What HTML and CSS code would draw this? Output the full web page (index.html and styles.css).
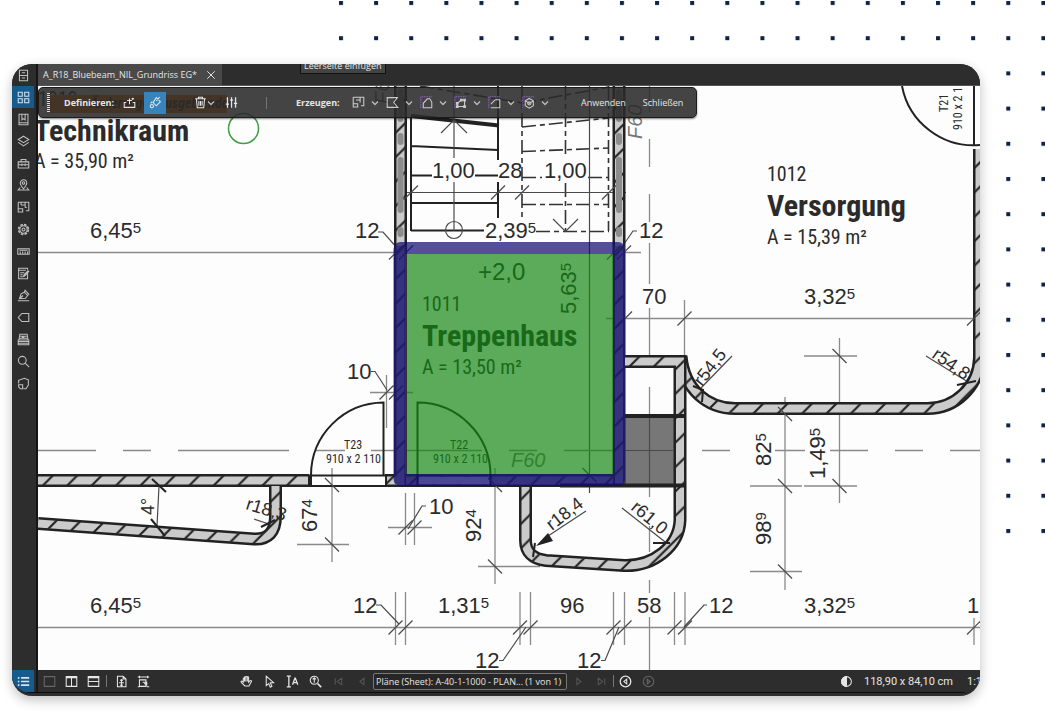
FILE: index.html
```html
<!DOCTYPE html>
<html lang="de">
<head>
<meta charset="utf-8">
<title>A_R18_Bluebeam_NIL_Grundriss EG</title>
<link rel="stylesheet" href="styles.css">
</head>
<body>
<svg class="dots" width="707" height="535" aria-hidden="true">
  <defs><pattern id="dot" width="35.12" height="35.2" patternUnits="userSpaceOnUse"><rect x="1" y="1" width="4" height="4" fill="#0b2348"/></pattern></defs>
  <rect width="707" height="535" fill="url(#dot)"/>
</svg>
<main class="app">
  <div class="body">
    <nav class="rail" aria-label="Bedienfelder">
      <button aria-label="Dateizugriff"><svg viewBox="0 0 16 16"><path d="M3 1.500h10v13H3zM3 8h10M6 4.500h4M6 11h4"/></svg></button>
      <button class="on" aria-label="Miniaturen"><svg viewBox="0 0 16 16"><path d="M1.500 1.500h5v5h-5zM9.500 1.500h5v5h-5zM1.500 9.500h5v5h-5zM9.500 9.500h5v5h-5z"/></svg></button>
      <button aria-label="Lesezeichen"><svg viewBox="0 0 16 16"><path d="M4 1.500h9.500v13H2.500v-13zM6 1.500v7l2-1.500 2 1.500v-7M2.500 12h11"/></svg></button>
      <button aria-label="Ebenen"><svg viewBox="0 0 16 16"><path d="M8 1.500l6.500 4L8 9.500l-6.500-4zM1.500 9L8 13.500 14.500 9"/></svg></button>
      <button aria-label="Werkzeuge"><svg viewBox="0 0 16 16"><path d="M1.500 6h13v7.500h-13zM5 6V3h6v3M1.500 9.500h13M6 8v3M10 8v3"/></svg></button>
      <button aria-label="Standorte"><svg viewBox="0 0 16 16"><path d="M8 12C5 8.500 4 7 4 5a4 4 0 0 1 8 0c0 2-1 3.500-4 7zM4 10.500l-2.500 3h13l-2.500-3"/><circle cx="8" cy="5" r="1.500"/></svg></button>
      <button aria-label="Räume"><svg viewBox="0 0 16 16"><path d="M1.500 1.500h13V12H11M1.500 1.500v12H7v-4H1.500M5 1.500V5M5 5h5V1.500M10 5v3M10 8h2"/></svg></button>
      <button aria-label="Eigenschaften"><svg viewBox="0 0 16 16"><circle cx="8" cy="8" r="6" stroke-width="2" stroke-dasharray="3.200 1.500"/><circle cx="8" cy="8" r="4.500"/><circle cx="8" cy="8" r="1.800"/></svg></button>
      <button aria-label="Messungen"><svg viewBox="0 0 16 16"><path d="M1 4.500h14v7H1zM4 8v3M7 8v3M10 8v3M13 8v3M3 6.500h10"/></svg></button>
      <button aria-label="Formulare"><svg viewBox="0 0 16 16"><path d="M13 8v6.500H2v-13h11v2M2 4h9M4 7h5M4 9.500h3M4 12h3M14.500 5.500l-5 5.500-1.500.500.500-1.500 5-5.500z"/></svg></button>
      <button aria-label="Signaturen"><svg viewBox="0 0 16 16"><path d="M1 14.500h14M3 12l2-6 4-2 4 4-2.500 3.500zM3 12l4.500-4M9 4l1-2.500 4.500 5L13 8"/></svg></button>
      <button aria-label="Markierungen"><svg viewBox="0 0 16 16"><path d="M6 3h8.500v10H6L1.500 8z"/></svg></button>
      <button aria-label="Sets"><svg viewBox="0 0 16 16"><path d="M3.500 1.500h9l1 7h-11zM1.500 8.500h13v6h-13zM2 10.500h12M2 12.500h12M4 4h8M3.500 6.500h9"/><path stroke-width="2.500" d="M6 5h3"/></svg></button>
      <button aria-label="Suchen"><svg viewBox="0 0 16 16"><circle cx="6.500" cy="6.500" r="4.800"/><path d="M10 10l5 5"/></svg></button>
      <button aria-label="Studio"><svg viewBox="0 0 16 16"><path d="M2 8V4l7-2.500 5 2V10l-3 4.500H8M2 9.500h5v5H4L2 12z"/></svg></button>
      <button class="on last" aria-label="Markierungsliste"><svg viewBox="0 0 16 16"><path stroke-width="2" d="M5 3.500h10M5 8h10M5 12.500h10M1 3.500h2M1 8h2M1 12.500h2"/></svg></button>
    </nav>
    <div class="work">
      <header class="tabs">
        <div class="tab"><span>A_R18_Bluebeam_NIL_Grundriss EG*</span><button aria-label="Tab schließen"><svg viewBox="0 0 16 16"><path d="M3 3l10 10M13 3L3 13"/></svg></button></div>
        <div class="tip" role="tooltip">Leerseite einfügen</div>
      </header>
      <section class="view">
        <svg class="plan" viewBox="38 86 942 584" preserveAspectRatio="xMinYMin slice" role="img" aria-label="Grundriss EG">
          <defs>
            <pattern id="ha" width="24.400" height="24.400" patternUnits="userSpaceOnUse" patternTransform="translate(16 0)"><path d="M-2 26.400L26.400 -2M-2 2L2 -2M22.400 26.400L26.400 22.400" stroke="#222" stroke-width="2.200"/></pattern>
            <pattern id="hb" width="24.400" height="24.400" patternUnits="userSpaceOnUse" patternTransform="translate(20 0)"><path d="M-2 26.400L26.400 -2M-2 2L2 -2M22.400 26.400L26.400 22.400" stroke="#222" stroke-width="2.200"/></pattern>
            <path id="t" d="M-7 7L7 -7" class="thin dk"/>
            <path id="v" d="M-7 -7L7 7" class="thin dk"/>
            <path id="w1" d="M38 480.500H309M385 480.500H397"/>
            <path id="w2" d="M38 523.500L254 539Q275.500 540 275.500 516V486"/>
            <path id="w3" d="M400.500 86V486M619 86V486M406 480.500H613"/>
            <path id="w4" d="M625 361.500H680V520A54 47 0 0 1 624 565.500L546 560.500Q525.500 558 525.500 540V486"/>
            <path id="w5" d="M681 356C684 390 708 408.500 735 408.500H927A52 52 0 0 0 979.500 358V149"/>
          </defs>

          <!-- room 1010, legend strip -->
          <text x="38" y="106" class="n20">1010</text>
          <rect x="50" y="95" width="177" height="18" fill="#ff7a00"/>
          <text x="90" y="108" class="strip">Änderungen ausgeblendet</text>

          <!-- stairs -->
          <g class="mid">
            <path d="M411 146L498 150M411 175.500H432M475 175.500H498M411 203H498M411 230.500H484M411 118V231M498 86V160M498 182V218"/>
            <path d="M411 116L499 125.500" stroke-width="4"/>
          </g>
          <g class="dash">
            <path d="M420 86L522 103M522 103L609 87M522 127L609 118M522 151.500L609 148M522 177.500H542M588 177.500H609M522 204.500H609M536 231.500H609"/>
            <path d="M522 86V218M608.500 86V231M565.500 86V158M565.500 183V231"/>
          </g>
          <path class="thin dk" d="M454 86V158M454 182V231M441 133L454 120L467 133M553 219L565.500 231.500L578 219M405 192.500H626M589.500 86V493"/>
          <circle cx="454" cy="230" r="8.500" class="thin dk"/>

          <!-- grid axes and dimension lines -->
          <path class="thin" d="M38 450.500H96M123 450.500H151M178 450.500H289M315 450.500H345M371 450.500H482M509 450.500H537M564 450.500H673M702 450.500H730M775 450.500H805M830 450.500H868M895 450.500H923M950 450.500H980
            M649.500 86V112M649.500 139V167M649.500 194V222M649.500 243V284M649.500 308V359M649.500 387V497M649.500 526V552M649.500 580V593M649.500 617V670
            M38 252.500H405M614 252.500H641M38 627.500H980M606 318.500H980
            M395.500 592V645M405.500 592V645M520 592V645M530.500 592V645M613.500 592V645M624.500 592V645M674.500 592V645M685 592V645M974 618V645
            M684.500 300V356M785 397V590M750 486H802M750 571.500H802M839.500 338V503M804 356H857M804 486H857
            M332 468V562M297 544.500H349M495 468V584M478 566.500H540M405.500 493V545M414.500 493V545M388 527.500H432M386.500 375V428M370 392.500H413"/>
          <path class="thin dk" d="M378 232H383L398 249M637 231H633L624 244M371 371.500H375L387 390M426 506H422L408 529M376 605H381L399 624M499 660.500H503L526 627M601 660.500H605L619 627M707 605H704L684 627M159 486L157 526M732 356L701 388M926 356L968 382M586 511L545 538M622 508L669 545M254 519L272 525"/>

          <!-- walls -->
          <rect x="625" y="416" width="50" height="69" fill="#777"/>
          <path class="thin dk" d="M625 450.500H673M649.500 416V485"/>
          <g class="edge"><use href="#w5"/></g>
          <g class="core"><use href="#w5"/></g>
          <g class="hatch"><use href="#w5" stroke="url(#hb)"/></g>
          <g class="edge"><use href="#w1"/><use href="#w2"/><use href="#w3"/><use href="#w4"/></g>
          <g class="core"><use href="#w1"/><use href="#w2"/><use href="#w3"/><use href="#w4"/></g>
          <g class="hatch"><use href="#w1" stroke="url(#ha)"/><use href="#w2" stroke="url(#ha)"/><use href="#w3" stroke="url(#ha)"/><use href="#w4" stroke="url(#hb)"/></g>
          <path d="M400.500 92V119M619 92V119M400.500 136V142M619 136V142M400.500 160V210M619 160V210M400.500 230V234M619 230V234" stroke="#8c8c8c" stroke-width="6" stroke-linecap="round"/>
          <path d="M400.500 246V480H619V246" fill="none" stroke="#666" stroke-opacity=".5" stroke-width="12"/>
          <path class="mid" d="M309 475V486M386 475V486M309 475.500H386M309 486H625" stroke-width="3"/>
          <rect x="419" y="477" width="71" height="7" fill="#ddd"/>
          <path d="M625 416H685M560 485.500H685" stroke="#222" stroke-width="4"/>

          <!-- doors -->
          <g class="mid"><path d="M383.500 475V402.500A73 73 0 0 0 311 475V486M417.500 486V402.500A73 73 0 0 1 490.500 475V486M902 86A73 73 0 0 0 980 145M974 86V146"/></g>
          <path d="M536 546L548 533L553 541Z" fill="#222"/>
          <path class="mid" d="M693 386L703 390L702 402M957 385L976 381M653 543L670 543M533 557L535 543M261 527L275 520"/>
          <circle cx="243.500" cy="128.500" r="15" fill="none" stroke="#3c9f44" stroke-width="1.500"/>

          <!-- tick marks -->
          <g>
            <use href="#t" x="411" y="192.500"/><use href="#t" x="498" y="192.500"/><use href="#t" x="522" y="192.500"/><use href="#t" x="609" y="192.500"/>
            <use href="#t" x="396" y="252.500"/><use href="#t" x="406" y="252.500"/><use href="#t" x="614" y="252.500"/><use href="#t" x="624" y="252.500"/>
            <use href="#t" x="625" y="318.500"/><use href="#t" x="684.500" y="318.500"/><use href="#t" x="974" y="318.500"/>
            <use href="#t" x="386.500" y="392.500"/><use href="#t" x="396" y="392.500"/><use href="#t" x="405.500" y="527.500"/><use href="#t" x="414.500" y="527.500"/>
            <use href="#t" x="395.500" y="627.500"/><use href="#t" x="405.500" y="627.500"/><use href="#t" x="520" y="627.500"/><use href="#t" x="530.500" y="627.500"/>
            <use href="#t" x="613.500" y="627.500"/><use href="#t" x="624.500" y="627.500"/><use href="#t" x="674.500" y="627.500"/><use href="#t" x="685" y="627.500"/><use href="#t" x="974" y="627.500"/>
            <use href="#v" x="332" y="485"/><use href="#v" x="332" y="544.500"/><use href="#v" x="495" y="485"/><use href="#v" x="495" y="566.500"/><use href="#v" x="589.500" y="475"/>
            <use href="#v" x="785" y="414"/><use href="#v" x="785" y="486"/><use href="#v" x="785" y="571.500"/><use href="#v" x="839.500" y="356"/><use href="#v" x="839.500" y="486"/>
            <path class="mid" d="M152 479L166 492M151 519L165 536"/>
          </g>

          <!-- lettering -->
          <text x="34" y="141" class="nb">Technikraum</text>
          <text x="34" y="168" class="n20">A = 35,90 m²</text>
          <text x="767" y="181" class="n20">1012</text>
          <text x="767" y="216" class="nb">Versorgung</text>
          <text x="767" y="244" class="n20">A = 15,39 m²</text>
          <text x="422" y="311" class="n20">1011</text>
          <text x="422" y="346" class="nb">Treppenhaus</text>
          <text x="422" y="374" class="n20">A = 13,50 m²</text>
          <g class="n12">
            <text x="344" y="449">T23</text><text x="326" y="463">910 x 2 110</text>
            <text x="450" y="449">T22</text><text x="433" y="463">910 x 2 110</text>
            <text transform="translate(948 112) rotate(-90)">T21</text><text transform="translate(962 130) rotate(-90)">910 x 2 110</text>
          </g>
          <g class="dim">
            <text x="90" y="238">6,45<tspan class="sup" dy="-5">5</tspan></text>
            <text x="355" y="238">12</text><text x="639" y="238">12</text>
            <text x="432" y="178">1,00</text><text x="498" y="178">28</text><text x="544" y="178">1,00</text>
            <text x="485" y="238">2,39<tspan class="sup" dy="-5">5</tspan></text>
            <text x="478" y="280" class="big">+2,0</text>
            <text x="347" y="379">10</text><text x="429" y="514">10</text>
            <text x="642" y="304">70</text>
            <text x="804" y="304">3,32<tspan class="sup" dy="-5">5</tspan></text>
            <text x="90" y="613">6,45<tspan class="sup" dy="-5">5</tspan></text>
            <text x="353" y="613">12</text>
            <text x="438" y="613">1,31<tspan class="sup" dy="-5">5</tspan></text>
            <text x="560" y="613">96</text><text x="637" y="613">58</text><text x="709" y="613">12</text>
            <text x="804" y="613">3,32<tspan class="sup" dy="-5">5</tspan></text>
            <text x="967" y="613">12</text><text x="475" y="668">12</text><text x="577" y="668">12</text>
            <text transform="translate(576 314) rotate(-90)">5,63<tspan class="sup" dy="-5">5</tspan></text>
            <text transform="translate(317 532) rotate(-90)">67<tspan class="sup" dy="-5">4</tspan></text>
            <text transform="translate(481 542) rotate(-90)">92<tspan class="sup" dy="-5">4</tspan></text>
            <text transform="translate(771 466) rotate(-90)">82<tspan class="sup" dy="-5">5</tspan></text>
            <text transform="translate(825 479) rotate(-90)">1,49<tspan class="sup" dy="-5">5</tspan></text>
            <text transform="translate(771 545) rotate(-90)">98<tspan class="sup" dy="-5">9</tspan></text>
            <g class="rad">
              <text transform="translate(154 515) rotate(-90)">4°</text>
              <text transform="translate(245 509) rotate(17)">r18,3</text>
              <text transform="translate(552 531) rotate(-38)">r18,4</text>
              <text transform="translate(630 509) rotate(40)">r61,0</text>
              <text transform="translate(702 387) rotate(-52)">r54,5</text>
              <text transform="translate(931 357) rotate(35)">r54,8</text>
            </g>
          </g>
          <g class="fire"><text x="511" y="467">F60</text><text transform="translate(642 139) rotate(-90)">F60</text><text transform="translate(389 104) rotate(-90)">F60</text></g>

          <!-- room fill and boundary -->
          <rect x="407" y="254" width="206" height="220" fill="#118511" fill-opacity=".69"/>
          <rect x="399.500" y="248" width="219.500" height="232" rx="1" fill="none" stroke="#120b73" stroke-opacity=".72" stroke-width="12" stroke-linejoin="round"/>
        </svg>

        <div class="bar" role="toolbar" aria-label="Räume">
          <span class="grip"></span>
          <b class="lbl first">Definieren:</b>
          <button class="ic wide" aria-label="Hinzufügen"><svg viewBox="0 0 16 16"><path d="M4 8H1.500v6h13V8H12M8 10V3M5 5.500h6M12 2v3M10.500 3.500h3"/></svg></button>
          <button class="ic on" aria-label="Füllen"><svg viewBox="0 0 16 16"><path d="M9 2l5 5-5 5-4-4zM13 1.500L9 6M4 7l-2 2"/><circle cx="3.500" cy="12.500" r="2"/></svg></button>
          <button class="ic trash" aria-label="Löschen"><svg viewBox="0 0 16 16"><path d="M1.500 3.500h13M5.500 3V1.500h5V3M3 4l1 10.500h8L13 4M6 6v6M8 6v6M10 6v6"/></svg></button>
          <button class="ch near" aria-label="Löschoptionen"><svg viewBox="0 0 8 8"><path d="M1 2.500l3 3 3-3"/></svg></button>
          <button class="ic sl" aria-label="Einstellungen"><svg viewBox="0 0 16 16"><path stroke-width="1.600" d="M3 1.500v13M8 1.500v13M13 1.500v13M1 10h4M6 5h4M11 9h4"/></svg></button>
          <span class="sep"></span>
          <b class="lbl second">Erzeugen:</b>
          <div class="tools">
            <button class="ic" aria-label="Raum"><svg viewBox="0 0 16 16"><path d="M1.500 1.500h13V12H11M1.500 1.500v12H7v-4H1.500M5 5h5V1.500M10 5v3"/></svg></button><button class="ch" aria-label="Raum, mehr"><svg viewBox="0 0 8 8"><path d="M1 2.500l3 3 3-3"/></svg></button>
            <button class="ic" aria-label="Polygon"><svg viewBox="0 0 16 16"><path d="M1.500 2H14L9.500 8l5 6h-13z"/></svg></button><button class="ch" aria-label="Polygon, mehr"><svg viewBox="0 0 8 8"><path d="M1 2.500l3 3 3-3"/></svg></button>
            <button class="ic" aria-label="Fläche"><svg viewBox="0 0 16 16"><path class="vio" d="M1 15V1h14"/><path d="M4 14.500V9l5-5.500h3l2.500 4v7z"/></svg></button><button class="ch" aria-label="Fläche, mehr"><svg viewBox="0 0 8 8"><path d="M1 2.500l3 3 3-3"/></svg></button>
            <button class="ic" aria-label="Polylinie"><svg viewBox="0 0 16 16"><path class="vio" d="M1 15V1h14"/><path d="M4 13V9l5-4h4v8z"/><path fill="currentColor" d="M3 12h2v2H3zM12 12h2v2h-2zM12 4h2v2h-2zM8 4h2v2H8zM3 8h2v2H3z"/></svg></button><button class="ch" aria-label="Polylinie, mehr"><svg viewBox="0 0 8 8"><path d="M1 2.500l3 3 3-3"/></svg></button>
            <button class="ic" aria-label="Ausschnitt"><svg viewBox="0 0 16 16"><path class="vio" d="M1 15V1h14"/><path d="M3.500 10L9 4.500h5.500v10h-11"/></svg></button><button class="ch" aria-label="Ausschnitt, mehr"><svg viewBox="0 0 8 8"><path d="M1 2.500l3 3 3-3"/></svg></button>
            <button class="ic" aria-label="Volumen"><svg viewBox="0 0 16 16"><path class="vio" d="M1 15V1h14"/><path d="M9 3l5 3v6l-5 3-5-3V6zM4 6l5 3 5-3"/><circle cx="9" cy="9" r="2"/></svg></button><button class="ch" aria-label="Volumen, mehr"><svg viewBox="0 0 8 8"><path d="M1 2.500l3 3 3-3"/></svg></button>
          </div>
          <div class="acts"><button>Anwenden</button><button>Schließen</button></div>
        </div>
      </section>
      <footer class="status">
        <div class="set views">
          <button class="dim1" aria-label="Einzelansicht"><svg viewBox="0 0 16 16"><path d="M1.500 2h13v12h-13z"/></svg></button>
          <button aria-label="Vertikal teilen"><svg viewBox="0 0 16 16"><path d="M1.500 2h13v12h-13zM8 2v12M1.500 3.500h13"/></svg></button>
          <button aria-label="Horizontal teilen"><svg viewBox="0 0 16 16"><path d="M1.500 2h13v12h-13zM1.500 8h13M1.500 3.500h13"/></svg></button>
          <span class="sep"></span>
          <button aria-label="Seite einpassen"><svg viewBox="0 0 16 16"><path d="M3 1.500h7l3.500 3.500v9.500H3zM10 1.500V5h3.500M8 6v7M5 9.500h6M6.500 7L8 5.500 9.500 7M6.500 12L8 13.500 9.500 12"/></svg></button>
          <button aria-label="Breite einpassen"><svg viewBox="0 0 16 16"><path d="M1 2.500h14M3 1v3M13 1v3M3 6h8v8H3zM7 9h5v4M12 13l-3-3M1 14.500h2M12 14.500h3"/></svg></button>
        </div>
        <div class="set mids">
          <button aria-label="Schwenken"><svg viewBox="0 0 16 16"><path d="M4 9V4.500c0-1 1.500-1 1.500 0V3c0-1 1.700-1 1.700 0v-.5c0-1 1.700-1 1.700 0V3c0-1 1.700-1 1.700 0v6l2-2c1-.700 2 .300 1.500 1L11 13.500H6L1.500 9c-.700-1 .700-2 1.500-1zM5.500 4v4M7.200 3v5M9 3v5"/></svg></button>
          <button aria-label="Auswählen"><svg viewBox="0 0 16 16"><path d="M4 1.500V13l3-2.500L9 15l2-1-2-4.500h4z"/></svg></button>
          <button aria-label="Text auswählen"><svg viewBox="0 0 16 16"><path d="M1 1.500h5M1 14.500h5M3.500 1.500v13M8 12l3-8h.500l3 8M9 9.500h4.500" stroke-width="1.600"/></svg></button>
          <button aria-label="Zoom"><svg viewBox="0 0 16 16"><circle cx="6.500" cy="6.500" r="5"/><path d="M10.500 10.500l4.500 4.500" stroke-width="2"/><path d="M6.500 3.500v6M4.500 5.500l2-2 2 2"/></svg></button>
          <button class="dim1 nav" aria-label="Erste Seite"><svg viewBox="0 0 16 16"><path d="M4 4v8M12 4L6.500 8l5.500 4z"/></svg></button>
          <button class="dim1 nav" aria-label="Vorherige Seite"><svg viewBox="0 0 16 16"><path d="M11 4L6 8l5 4z"/></svg></button>
          <input class="page" aria-label="Seite" value="Pläne (Sheet): A-40-1-1000 - PLAN... (1 von 1)">
          <button class="dim1 nav" aria-label="Nächste Seite"><svg viewBox="0 0 16 16"><path d="M6 4l5 4-5 4z"/></svg></button>
          <button class="dim1 nav" aria-label="Letzte Seite"><svg viewBox="0 0 16 16"><path d="M12 4v8M4 4l5.500 4L4 12z"/></svg></button>
          <span class="sep"></span>
          <button aria-label="Vorherige Ansicht"><svg viewBox="0 0 16 16"><circle cx="8" cy="8" r="6.500" stroke-width="1.600"/><path d="M9.500 5L6 8l3.500 3z"/></svg></button>
          <button class="dim1" aria-label="Nächste Ansicht"><svg viewBox="0 0 16 16"><circle cx="8" cy="8" r="6.500"/><path d="M6.500 5L10 8l-3.500 3z"/></svg></button>
        </div>
        <div class="info">
          <button aria-label="Kontrast"><svg viewBox="0 0 16 16"><circle cx="8" cy="8" r="6"/><path fill="currentColor" d="M8 2a6 6 0 0 0 0 12z"/></svg></button>
          <span>118,90 x 84,10 cm</span><span class="scale">1:100</span>
        </div>
      </footer>
    </div>
  </div>
</main>
</body>
</html>
```
FILE: styles.css
```css
* { box-sizing: border-box; }
body {
  margin: 0;
  min-height: 100vh;
  padding: 64px 65px 18px 12px;
  display: flex;
  background: #fff;
  font-family: Roboto, "Liberation Sans", sans-serif;
  font-size: 11px;
  color: #e6e6e6;
}
button {
  border: 0;
  padding: 0;
  background: none;
  color: inherit;
  font: inherit;
  display: flex;
  align-items: center;
  justify-content: center;
  flex: none;
}
button svg { width: 13px; height: 13px; fill: none; stroke: currentColor; stroke-width: 1.3px; }
.dots { position: absolute; top: 0; right: 0; }

.app {
  position: relative;
  flex: 1;
  min-width: 0;
  display: flex;
  flex-direction: column;
  border-radius: 20px;
  border-bottom: 3px solid #2d2d2d;
  overflow: hidden;
  background: #2d2d2d;
  box-shadow: 0 4px 12px rgba(0, 0, 0, .25);
}
.body { flex: 1; display: flex; min-height: 0; border-bottom: 1px solid #0c0c0c; }

.rail { width: 26px; flex: none; display: flex; flex-direction: column; background: #2d2d2d; border-right: 2px solid #161616; color: #c0c0c0; }
.rail button { width: 22px; height: 22px; }
.rail .on { background: #175a8c; color: #d5e4f0; }
.rail .last { margin-top: auto; }

.work { flex: 1; min-width: 0; display: flex; flex-direction: column; }
.tabs { position: relative; height: 22px; flex: none; display: flex; overflow: hidden; border-bottom: 1px solid #555; background: #2d2d2d; }
.tab { display: flex; align-items: center; gap: 8px; padding: 0 5px; background: #494949; white-space: nowrap; }
.tab, .tip, .bar, .page { font-family: "Open Sans", Roboto, sans-serif; font-size: 9px; }
.tab button svg { width: 12px; height: 12px; }
.tip { position: absolute; left: 262px; top: -6px; padding: 1px 3px; border: 1px solid #111; background: #444; line-height: 12px; white-space: nowrap; }

.view { position: relative; flex: 1; min-height: 0; overflow: hidden; background: #fdfdfd; }
.plan { display: block; width: 100%; height: 100%; fill: #2b2b2b; }
.thin { fill: none; stroke: #8a8a8a; stroke-width: 1.3; }
.dk { stroke: #4a4a4a; stroke-width: 1.2; }
.mid { fill: none; stroke: #222; stroke-width: 2; }
.dash path { fill: none; stroke: #333; stroke-width: 1.6; stroke-dasharray: 14 4 5 4; }
.edge use { fill: none; stroke: #222; stroke-width: 13; }
.core use { fill: none; stroke: #cbcbcb; stroke-width: 8; }
.hatch use { fill: none; stroke-width: 9; }
.dim { font: 22px "Liberation Sans", sans-serif; }
.sup { font-size: 15px; }
.big { font-size: 24px; }
.rad { font-size: 18px; }
.n20, .nb, .n12, .strip { font-family: "Liberation Sans Narrow", "Arial Narrow", "Roboto Condensed", "Liberation Sans", sans-serif; }
.n20 { font-size: 20px; }
.n12 { font-size: 12px; }
.nb { font-size: 30px; font-weight: 700; }
.strip { font-size: 14px; font-weight: 700; font-style: italic; }
.fire { font: italic 20px "Liberation Sans", sans-serif; fill: #777; }

.bar {
  position: absolute;
  left: 0;
  top: 1px;
  height: 31px;
  display: flex;
  align-items: center;
  padding: 0 13px 0 8px;
  border: 1px solid #1c1c1c;
  border-radius: 5px;
  background: rgba(42, 42, 42, .88);
  box-shadow: 0 1px 2px rgba(0, 0, 0, .5);
}
.grip { width: 3px; height: 20px; background: repeating-linear-gradient(#ddd 0 1px, transparent 1px 2px); }
.lbl { font-weight: 700; white-space: nowrap; }
.first { margin-left: 14px; width: 52px; }
.second { width: 43px; }
.ic { width: 22px; height: 22px; }
.ic.on { background: #3584bb; }
.ic.wide { width: 28px; padding-right: 2px; }
.ic.trash { width: 14px; margin-left: 27px; }
.ch { width: 12px; height: 22px; color: #bbb; }
.ch svg { width: 8px; height: 8px; }
.ch.near { width: 8px; }
.sl { margin-left: 5px; }
.sep { width: 1px; height: 12px; background: #777; }
.bar .sep { margin: 0 29px 0 24px; }
.tools { display: flex; margin-left: 8px; color: #ccc; }
.vio { stroke: #8a5fc0; stroke-dasharray: 2 1; }
.acts { display: flex; gap: 17px; margin-left: 30px; }

.status { height: 22px; flex: none; display: flex; align-items: center; background: #2d2d2d; white-space: nowrap; overflow: hidden; }
.set { display: flex; align-items: center; flex: none; }
.set button { width: 23px; height: 22px; }
.views button { width: 22px; }
.views .sep { margin: 0 3px 0 2px; }
.status .dim1 { color: #666; }
.status .nav { color: #555; }
.mids { margin-left: 81px; }
.page { width: 194px; height: 17px; padding: 0 2px; border: 1px solid #777; border-radius: 2px; background: #262626; color: #e6e6e6; }
.info { display: flex; align-items: center; margin-left: auto; flex: none; }
.info span { margin-left: 11px; }
.info .scale { width: 13px; margin-left: 14px; overflow: hidden; }
```
